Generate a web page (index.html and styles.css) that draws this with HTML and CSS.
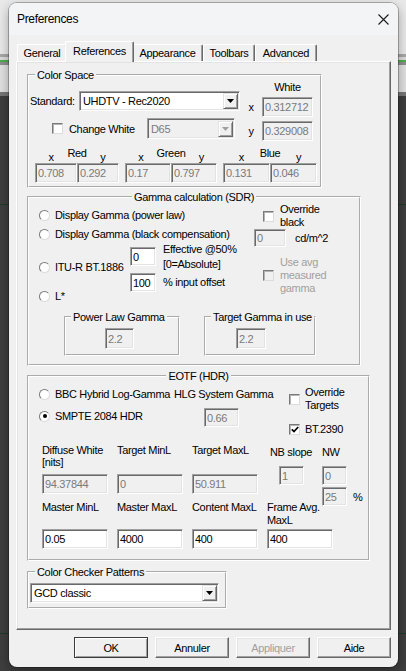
FILE: index.html
```html
<!DOCTYPE html>
<html lang="en">
<head>
    <meta charset="UTF-8">
    <meta name="viewport" content="width=device-width, initial-scale=1.0">
    <title>Preferences</title>
    <link rel="stylesheet" href="styles.css">
</head>
<body>
<div class="dialog">
    <div class="titlebar">
        <span class="title">Preferences</span>
        <span class="close">
            <svg width="11" height="11" viewBox="0 0 11 11"><path d="M0.5 0.5L10.5 10.5M10.5 0.5L0.5 10.5" stroke="#1b1b1b" stroke-width="1.1" fill="none"/></svg>
        </span>
    </div>

    <div class="tabs">
        <div class="tab tab-general">General</div>
        <div class="tab tab-refs active">References</div>
        <div class="tab tab-appearance">Appearance</div>
        <div class="tab tab-toolbars">Toolbars</div>
        <div class="tab tab-advanced">Advanced</div>
    </div>

    <div class="panel">
        <!-- Color space -->
        <fieldset class="group cs">
            <legend>Color Space</legend>
            <div class="cs-top">
                <div class="cs-left">
                    <div class="std-row">
                        <span class="std-label">Standard:</span>
                        <div class="combo combo-std">
                            <span class="combo-text">UHDTV - Rec2020</span>
                            <span class="combo-btn"><svg width="7" height="4" viewBox="0 0 7 4"><path d="M0 0H7L3.5 4Z"/></svg></span>
                        </div>
                    </div>
                    <div class="cw-row">
                        <span class="check"></span>
                        <span class="cw-label">Change White</span>
                        <div class="combo combo-white disabled">
                            <span class="combo-text">D65</span>
                            <span class="combo-btn"><svg width="7" height="4" viewBox="0 0 7 4"><path d="M0 0H7L3.5 4Z"/></svg></span>
                        </div>
                    </div>
                </div>
                <div class="cs-white">
                    <div class="white-title">White</div>
                    <div class="axis-row"><span class="axis">x</span><input class="edit w-white" value="0.312712" disabled></div>
                    <div class="axis-row"><span class="axis">y</span><input class="edit w-white" value="0.329008" disabled></div>
                </div>
            </div>
            <div class="primaries">
                <div class="prim prim-red">
                    <div class="prim-head"><span class="xy">x</span><span class="prim-name">Red</span><span class="xy">y</span></div>
                    <div class="prim-vals"><input class="edit" value="0.708" disabled><input class="edit" value="0.292" disabled></div>
                </div>
                <div class="prim prim-green">
                    <div class="prim-head"><span class="xy">x</span><span class="prim-name">Green</span><span class="xy">y</span></div>
                    <div class="prim-vals"><input class="edit" value="0.17" disabled><input class="edit" value="0.797" disabled></div>
                </div>
                <div class="prim prim-blue">
                    <div class="prim-head"><span class="xy">x</span><span class="prim-name">Blue</span><span class="xy">y</span></div>
                    <div class="prim-vals"><input class="edit" value="0.131" disabled><input class="edit" value="0.046" disabled></div>
                </div>
            </div>
        </fieldset>

        <!-- SDR gamma -->
        <fieldset class="group gamma">
            <legend class="center">Gamma calculation (SDR)</legend>
            <div class="g-top">
                <div class="g-left">
                    <div class="opt g-opt1"><span class="radio"></span><span>Display Gamma (power law)</span></div>
                    <div class="opt g-opt2"><span class="radio"></span><span>Display Gamma (black compensation)</span></div>
                    <div class="itu">
                        <div class="opt itu-opt"><span class="radio"></span><span>ITU-R BT.1886</span></div>
                        <div class="itu-fields">
                            <div class="field-row"><input class="edit w-itu" value="0"><span class="field-note">Effective @50%<br>[0=Absolute]</span></div>
                            <div class="field-row"><input class="edit w-itu" value="100"><span class="field-note">% input offset</span></div>
                        </div>
                    </div>
                    <div class="opt g-opt4"><span class="radio"></span><span>L*</span></div>
                </div>
                <div class="g-right">
                    <div class="chk-row"><span class="check"></span><span class="chk-text">Override<br>black</span></div>
                    <div class="cd-row"><input class="edit w-cd" value="0" disabled><span class="cd-unit">cd/m^2</span></div>
                    <div class="chk-row avg-row dim"><span class="check off"></span><span class="chk-text">Use avg<br>measured<br>gamma</span></div>
                </div>
            </div>
            <div class="g-sub">
                <fieldset class="group sub sub-power">
                    <legend>Power Law Gamma</legend>
                    <input class="edit w-sub" value="2.2" disabled>
                </fieldset>
                <fieldset class="group sub sub-target">
                    <legend>Target Gamma in use</legend>
                    <input class="edit w-sub2" value="2.2" disabled>
                </fieldset>
            </div>
        </fieldset>

        <!-- HDR transfer -->
        <fieldset class="group eotf">
            <legend class="center">EOTF (HDR)</legend>
            <div class="e-top">
                <div class="e-radios">
                    <div class="opt"><span class="radio"></span><span>BBC Hybrid Log-Gamma</span></div>
                    <div class="opt e-opt2"><span class="radio on"></span><span>SMPTE 2084 HDR</span></div>
                </div>
                <div class="e-hlg">
                    <div class="hlg-title">HLG System Gamma</div>
                    <input class="edit w-hlg" value="0.66" disabled>
                </div>
                <div class="e-flags">
                    <div class="chk-row"><span class="check"></span><span class="chk-text">Override<br>Targets</span></div>
                    <div class="chk-row bt-row">
                        <span class="check"><svg width="8" height="7" viewBox="0 0 8 7"><path d="M0.8 3.3L3 5.6L7.2 1" stroke="#000" stroke-width="1.7" fill="none"/></svg></span>
                        <span class="chk-text">BT.2390</span>
                    </div>
                </div>
            </div>
            <div class="e-grid1">
                <div class="cell"><div class="cell-label">Diffuse White<br>[nits]</div><input class="edit" value="94.37844" disabled></div>
                <div class="cell"><div class="cell-label">Target MinL</div><input class="edit" value="0" disabled></div>
                <div class="cell"><div class="cell-label">Target MaxL</div><input class="edit" value="50.911" disabled></div>
                <div class="cell nb"><div class="small-label">NB slope</div><input class="edit w-small" value="1" disabled></div>
                <div class="cell nw">
                    <div class="small-label">NW</div>
                    <input class="edit w-small" value="0" disabled>
                    <div class="pct-row"><input class="edit w-small" value="25" disabled><span class="pct">%</span></div>
                </div>
            </div>
            <div class="e-grid2">
                <div class="cell"><div class="cell-label2">Master MinL</div><input class="edit" value="0.05"></div>
                <div class="cell"><div class="cell-label2">Master MaxL</div><input class="edit" value="4000"></div>
                <div class="cell"><div class="cell-label2">Content MaxL</div><input class="edit" value="400"></div>
                <div class="cell"><div class="cell-label2">Frame Avg.<br>MaxL</div><input class="edit" value="400"></div>
            </div>
        </fieldset>

        <fieldset class="group ccp">
            <legend>Color Checker Patterns</legend>
            <div class="combo combo-ccp">
                <span class="combo-text">GCD classic</span>
                <span class="combo-btn"><svg width="7" height="4" viewBox="0 0 7 4"><path d="M0 0H7L3.5 4Z"/></svg></span>
            </div>
        </fieldset>
    </div>

    <div class="buttons">
        <button class="btn default">OK</button>
        <button class="btn">Annuler</button>
        <button class="btn" disabled>Appliquer</button>
        <button class="btn">Aide</button>
    </div>
</div>
</body>
</html>
```

FILE: styles.css
```css
* {
    box-sizing: border-box;
}
body {
    margin: 0;
    height: 671px;
    overflow: hidden;
    font-family: "Liberation Sans", Arial, sans-serif;
    font-size: 11px;
    letter-spacing: -0.33px;
    color: #000;
    background:
        linear-gradient(to bottom, transparent 633px, #1f3a2a 633px, #1f3a2a 634px, transparent 634px),
        linear-gradient(to bottom, transparent 204px, #1f3a2a 204px, #1f3a2a 205px, transparent 205px),
        linear-gradient(to bottom,
            #e9e9e9 0, #e9e9e9 54px,
            #a8a8a8 54px, #a8a8a8 57px,
            #dcdcdc 57px, #dcdcdc 60px,
            #4cae4c 60px, #4cae4c 62px,
            #8f8f8f 62px, #8f8f8f 65px,
            #e0e0e0 65px, #e0e0e0 92px,
            #777 92px, #777 96px,
            #3e3e3e 96px);
}

.dialog {
    margin: 3px 0 0 9px;
    width: 389px;
    height: 664px;
    background: #f0f0f0;
    border-radius: 8px;
    overflow: hidden;
    box-shadow: 0 0 0 1px rgba(0, 0, 0, 0.25), 0 4px 12px rgba(0, 0, 0, 0.35);
}
.titlebar {
    height: 32px;
    display: flex;
    align-items: center;
    justify-content: space-between;
    padding-left: 8px;
    background: #f3f4f6;
}
.title {
    font-size: 12px;
}
.close {
    width: 28px;
    height: 32px;
    margin-right: 1px;
    display: flex;
    align-items: center;
    justify-content: center;
}

/* tab strip */
.tabs {
    display: flex;
    align-items: flex-end;
    height: 20px;
    margin-top: 6px;
    padding-left: 8px;
    position: relative;
    z-index: 1;
}
.tab {
    height: 17px;
    line-height: 16px;
    text-align: center;
    background: #f0f0f0;
    border-top: 1px solid #fff;
    border-left: 1px solid #fff;
    border-right: 1px solid #696969;
    border-radius: 2px 2px 0 0;
    box-shadow: inset -1px 0 #a0a0a0;
}
.tab.active {
    position: relative;
    z-index: 2;
    height: 21px;
    margin: 0 -2px -1px;
    padding-top: 1px;
    line-height: 17px;
}
.tab-general { width: 50px; }
.tab-refs { width: 69px; }
.tab-appearance { width: 71px; }
.tab-toolbars { width: 52px; }
.tab-advanced { width: 62px; }

.panel {
    margin-left: 7px;
    width: 375px;
    height: 569px;
    padding: 7px 0 0 10px;
    border: 1px solid;
    border-color: #fff #696969 #696969 #fff;
    box-shadow: inset -1px -1px #a0a0a0, inset 1px 1px #e3e3e3;
}

/* group boxes */
.group {
    margin: 0;
    padding: 0;
    min-inline-size: 0;
    border: 2px groove #fff;
}
.group > legend {
    padding: 0 2px;
    margin-left: 5px;
    line-height: 12px;
    white-space: nowrap;
}
.group > legend.center {
    margin: 0 auto;
}

/* common controls */
.edit {
    display: block;
    height: 20px;
    margin: 0;
    padding: 0 0 0 2px;
    font: inherit;
    letter-spacing: inherit;
    color: #000;
    background: #fff;
    border: 1px solid;
    border-color: #a0a0a0 #fff #fff #a0a0a0;
    box-shadow: inset 1px 1px #696969, inset -1px -1px #e3e3e3;
    outline: none;
    flex: none;
}
.edit:disabled {
    background: #f0f0f0;
    color: #7a7a7a;
}
.check {
    width: 11px;
    height: 11px;
    flex: none;
    display: flex;
    align-items: center;
    justify-content: center;
    background: #fff;
    border: 1px solid;
    border-color: #7a7a7a #dcdcdc #dcdcdc #7a7a7a;
    box-shadow: inset 1px 1px #b4b4b4;
}
.check.off {
    background: #f0f0f0;
}
.radio {
    width: 11px;
    height: 11px;
    flex: none;
    display: flex;
    align-items: center;
    justify-content: center;
    border-radius: 50%;
    background: #fff;
    border: 1px solid;
    border-color: #7a7a7a #dcdcdc #dcdcdc #7a7a7a;
}
.radio.on::after {
    content: "";
    width: 4px;
    height: 4px;
    border-radius: 50%;
    background: #000;
}
.combo {
    height: 20px;
    display: flex;
    align-items: center;
    background: #fff;
    border: 1px solid;
    border-color: #a0a0a0 #fff #fff #a0a0a0;
    box-shadow: inset 1px 1px #696969, inset -1px -1px #e3e3e3;
}
.combo-text {
    padding-left: 3px;
}
.combo-btn {
    margin: 0 1px 0 auto;
    width: 15px;
    height: 16px;
    display: flex;
    align-items: center;
    justify-content: center;
    background: #f0f0f0;
    border: 1px solid;
    border-color: #e3e3e3 #696969 #696969 #e3e3e3;
    box-shadow: inset 1px 1px #fff, inset -1px -1px #a0a0a0;
}
.combo.disabled {
    background: #f0f0f0;
    color: #7a7a7a;
}
.combo.disabled svg {
    fill: #a0a0a0;
}
.opt {
    display: flex;
    align-items: center;
    height: 12px;
    line-height: 12px;
    white-space: nowrap;
}
.opt .radio {
    margin-right: 5px;
}
.chk-row {
    display: flex;
    align-items: center;
}
.chk-text {
    margin-left: 6px;
    line-height: 13px;
    white-space: nowrap;
}
.dim {
    color: #a0a0a0;
}

/* Color Space */
.cs {
    width: 295px;
    padding: 0 0 3px 1px;
}
.cs-top {
    display: flex;
}
.cs-left {
    width: 210px;
    padding-top: 10px;
}
.std-row {
    display: flex;
    align-items: center;
    height: 20px;
}
.std-label {
    width: 49px;
}
.combo-std {
    width: 161px;
}
.cw-row {
    display: flex;
    align-items: center;
    height: 21px;
    margin-top: 7px;
}
.cw-row .check {
    margin-left: 22px;
}
.cw-label {
    width: 78px;
    margin-left: 6px;
}
.combo-white {
    width: 88px;
    height: 21px;
}
.cs-white {
    width: 73px;
}
.white-title {
    line-height: 12px;
    padding-left: 22px;
    text-align: center;
}
.axis-row {
    display: flex;
    align-items: center;
    margin-top: 4px;
}
.axis {
    width: 22px;
    text-align: center;
}
.w-white {
    width: 51px;
}
.primaries {
    display: flex;
    gap: 6px;
    margin-left: 5px;
}
.prim-head {
    display: grid;
    grid-template-columns: 1fr auto 1fr;
    height: 22px;
    text-align: center;
}
.prim-head .xy {
    align-self: end;
    line-height: 12px;
}
.prim-name {
    padding-top: 6px;
    line-height: 12px;
}
.prim-vals {
    display: flex;
}
.prim-vals .edit {
    width: 50%;
}
.prim-red { width: 84px; }
.prim-green { width: 92px; }
.prim-blue { width: 94px; }

/* Gamma calculation */
.gamma {
    width: 334px;
    margin-top: 3px;
    padding: 0 0 8px;
}
.g-top {
    display: flex;
}
.g-left {
    width: 225px;
    padding-left: 10px;
}
.g-opt1 { margin-top: 6px; }
.g-opt2 { margin-top: 7px; }
.itu {
    display: flex;
    margin-top: 7px;
}
.itu-opt {
    width: 91px;
    margin-top: 14px;
}
.itu-fields {
    display: flex;
    flex-direction: column;
    gap: 7px;
}
.field-row {
    display: flex;
    align-items: center;
    height: 19px;
}
.w-itu {
    width: 26px;
    height: 19px;
}
.field-note {
    margin-left: 7px;
    line-height: 15px;
    white-space: nowrap;
}
.g-opt4 { margin-top: -2px; }
.g-right {
    display: flex;
    flex-direction: column;
}
.g-right .chk-row {
    padding-left: 9px;
}
.cd-row {
    display: flex;
    align-items: center;
}
.w-cd {
    width: 32px;
    height: 18px;
}
.cd-unit {
    margin-left: 9px;
}
.avg-row {
    margin-top: 9px;
}
.g-sub {
    display: flex;
    margin-top: 9px;
    padding-left: 35px;
}
.sub {
    width: 116px;
    padding: 0 0 5px;
}
.sub .edit {
    margin-top: 5px;
    height: 21px;
}
.w-sub {
    width: 29px;
    margin-left: 39px;
}
.sub-target {
    width: 112px;
    margin-left: 24px;
}
.w-sub2 {
    width: 30px;
    margin-left: 30px;
}

/* EOTF */
.eotf {
    width: 343px;
    margin-top: 4px;
    padding: 0 0 10px;
}
.e-top {
    display: flex;
}
.e-radios {
    width: 145px;
    padding: 6px 0 0 10px;
}
.e-opt2 { margin-top: 10px; }
.e-hlg {
    width: 115px;
    padding-top: 6px;
}
.hlg-title {
    line-height: 12px;
    white-space: nowrap;
}
.w-hlg {
    width: 35px;
    height: 19px;
    margin: 8px 0 0 30px;
}
.e-flags {
    padding-top: 4px;
}
.e-flags .chk-text {
    margin-left: 5px;
}
.bt-row {
    margin-top: 11px;
}
.e-grid1 {
    display: grid;
    grid-template-columns: 66px 66px 66px 46px auto;
    column-gap: 9px;
    margin-top: 8px;
    padding-left: 13px;
}
.cell {
    display: flex;
    flex-direction: column;
    align-items: flex-start;
}
.cell-label {
    height: 24px;
    line-height: 12px;
    white-space: nowrap;
}
.cell .edit {
    width: 66px;
    margin-top: 6px;
}
.small-label {
    margin-top: 2px;
    line-height: 12px;
    white-space: nowrap;
}
.nb .small-label {
    padding-left: 3px;
}
.cell .w-small {
    width: 25px;
    height: 19px;
    margin-top: 8px;
}
.nb .w-small {
    margin-left: 12px;
}
.pct-row {
    display: flex;
    align-items: center;
    margin: 2px 0 -5px;
}
.pct-row .w-small {
    margin-top: 0;
}
.pct {
    margin-left: 6px;
}
.e-grid2 {
    display: grid;
    grid-template-columns: repeat(4, 66px);
    column-gap: 9px;
    padding-left: 13px;
}
.cell-label2 {
    height: 28px;
    line-height: 13px;
    white-space: nowrap;
}
.e-grid2 .edit {
    margin-top: 0;
}

/* Color checker */
.ccp {
    width: 200px;
    margin-top: 5px;
    padding: 0 0 4px 1px;
}
.combo-ccp {
    width: 189px;
    margin-top: 5px;
}

/* dialog buttons */
.buttons {
    display: flex;
    justify-content: flex-end;
    gap: 7px;
    margin-top: 7px;
    padding-right: 7px;
}
.btn {
    width: 74px;
    height: 21px;
    padding: 0;
    font: inherit;
    letter-spacing: inherit;
    color: #000;
    background: #f0f0f0;
    border: 1px solid;
    border-color: #fff #696969 #696969 #fff;
    box-shadow: inset -1px -1px #a0a0a0, inset 1px 1px #e3e3e3;
}
.btn.default {
    border-color: #3c3c3c;
    box-shadow: inset 1px 1px #fff, inset -1px -1px #a0a0a0;
}
.btn:disabled {
    color: #a0a0a0;
}
```
